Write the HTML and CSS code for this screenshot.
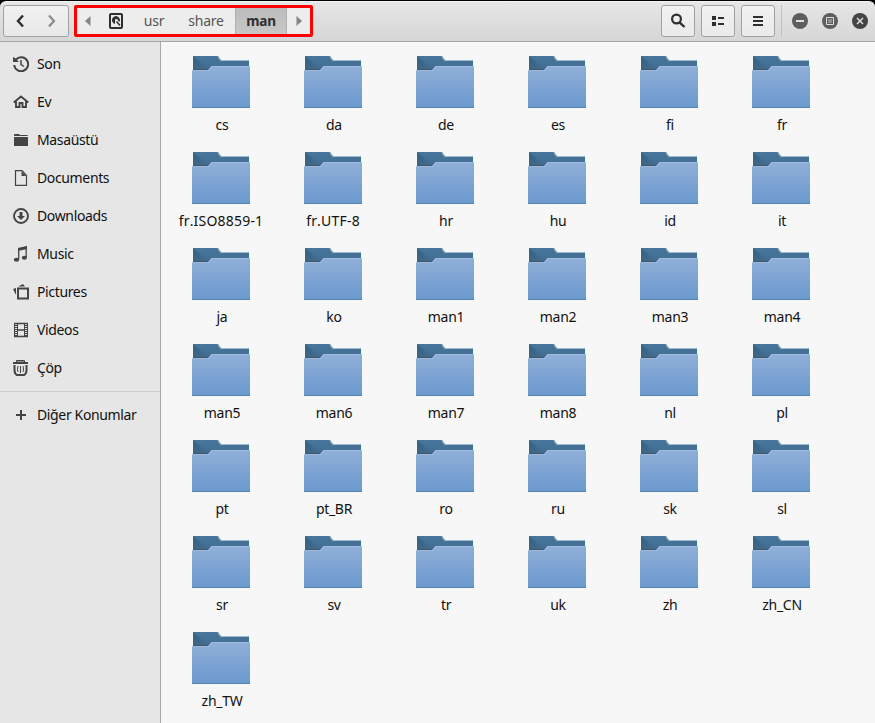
FILE: index.html
```
<!DOCTYPE html>
<html lang="tr">
<head>
<meta charset="utf-8">
<title>man</title>
<link rel="stylesheet" href="styles.css">
</head>
<body>
<div class="window">
<header class="header">
  <div class="nav">
    <span class="nav-btn"><svg width="16" height="16" viewBox="0 0 16 16"><path d="M11 2.500 6 8l5 5.500" fill="none" stroke="#2e2e2e" stroke-width="2.400"/></svg></span>
    <span class="nav-btn"><svg width="16" height="16" viewBox="0 0 16 16"><path d="M5 2.500 10 8l-5 5.500" fill="none" stroke="#8b8b8b" stroke-width="2.200"/></svg></span>
  </div>
  <div class="path">
    <span class="arrow"><svg width="6" height="10" viewBox="0 0 6 10"><path d="M5.500 0v10L0 5z" fill="#858585"/></svg></span>
    <span class="disk"><svg width="14" height="16" viewBox="0 0 14 16"><rect x="1" y="1" width="12" height="14" rx="1" fill="none" stroke="#2e2e2e" stroke-width="2"/><path d="M6 11A4 4 0 1 1 10.500 9L8.200 6.800 6 6.200z" fill="#2e2e2e"/><path d="m6.500 7 1.500-1.200L9 7.500 7.500 8.500z" fill="#ededed"/><path d="m7.500 8.500 3.500 4" stroke="#2e2e2e" stroke-width="1.500"/></svg></span>
    <span class="crumb usr">usr</span>
    <span class="crumb share">share</span>
    <span class="crumb current">man</span>
    <span class="arrow end"><svg width="6" height="10" viewBox="0 0 6 10"><path d="M.5 0v10L6 5z" fill="#858585"/></svg></span>
  </div>
  <div class="tools">
    <span class="tool"><svg width="16" height="16" viewBox="0 0 16 16"><circle cx="6.500" cy="6" r="4.400" fill="none" stroke="#2e2e2e" stroke-width="2.200"/><path d="m9.500 9.300 5 4.700" stroke="#2e2e2e" stroke-width="2.400"/></svg></span>
    <span class="tool"><svg width="16" height="16" viewBox="0 0 16 16"><path d="M2 3h4v4H2zM2 9h4v4H2zM8 4h6v2H8zM8 10h6v2H8z" fill="#2e2e2e"/></svg></span>
    <span class="tool"><svg width="16" height="16" viewBox="0 0 16 16"><path d="M3 3h10v2H3zM3 7h10v2H3zM3 11h10v2H3z" fill="#2e2e2e"/></svg></span>
  </div>
  <div class="controls">
    <svg width="16" height="16" viewBox="0 0 16 16"><circle cx="8" cy="8" r="8" fill="#5e5e5e"/><path d="M4 7h8v2H4z" fill="#dedede"/></svg>
    <svg width="16" height="16" viewBox="0 0 16 16"><circle cx="8" cy="8" r="8" fill="#5e5e5e"/><path d="M4.500 4.500h7v7h-7z" fill="none" stroke="#dedede"/><path d="M6 6h4v4H6z" fill="#8c8c8c"/></svg>
    <svg width="16" height="16" viewBox="0 0 16 16"><circle cx="8" cy="8" r="8" fill="#444"/><path d="m5 5 6 6m0-6-6 6" stroke="#dedede" stroke-width="1.500"/></svg>
  </div>
</header>
<div class="body">
<nav class="sidebar">
  <div class="place"><svg width="16" height="16" viewBox="0 0 16 16"><path d="M3 3.500A7 7 0 1 1 1.200 9" fill="none" stroke="#444" stroke-width="2"/><path d="M0 1v5h6L4.500 4.500 2 2z" fill="#444"/><path d="M8 4v4.500l3 2" fill="none" stroke="#444" stroke-width="1.500"/></svg>Son</div>
  <div class="place"><svg width="16" height="16" viewBox="0 0 16 16"><path d="M.7 8.500 8 2.500l7.300 6M3 7.500V13h3.500V9h3v4H13V7.500" fill="none" stroke="#444" stroke-width="1.900"/></svg>Ev</div>
  <div class="place"><svg width="16" height="16" viewBox="0 0 16 16"><path d="M1 4V3q0-1 1-1h4l1 1h7q1 0 1 1zM1 5h14v9H1z" fill="#444"/></svg>Masaüstü</div>
  <div class="place"><svg width="16" height="16" viewBox="0 0 16 16"><path d="M2.500.6h6.500l4.500 4.900v9.900h-11z" fill="none" stroke="#444" stroke-width="1.200"/><path d="M8.500 1v5H13z" fill="#444"/></svg>Documents</div>
  <div class="place"><svg width="16" height="16" viewBox="0 0 16 16"><circle cx="8" cy="8" r="7" fill="none" stroke="#444" stroke-width="1.900"/><path d="M6.500 4h3v4H12l-4 4-4-4h2.500z" fill="#444"/></svg>Downloads</div>
  <div class="place"><svg width="16" height="16" viewBox="0 0 16 16"><path d="M5.700 13V3l7.500-2v10.500" fill="none" stroke="#444" stroke-width="1.300"/><path d="m5 2 9-2v3L5 5z" fill="#444"/><ellipse cx="3.500" cy="13.800" rx="2.700" ry="2" fill="#444"/><ellipse cx="11.400" cy="11.800" rx="2.600" ry="2" fill="#444"/></svg>Music</div>
  <div class="place pictures"><svg width="16" height="16" viewBox="0 0 16 16"><path d="M5 4.500h10v10H5z" fill="none" stroke="#444" stroke-width="2"/><path d="m5 2.500 5-2.500 2 2.500zM0 5l3-1v7z" fill="#444"/></svg>Pictures</div>
  <div class="place"><svg width="16" height="16" viewBox="0 0 16 16"><path d="M1.500 1v14m13-14v14M4.500 1v14m7-14v14" stroke="#444"/><path d="M1 1.500h14M4 8h8M1 14.500h14" stroke="#444" stroke-width="1.300"/><path d="M3 1v14m10-14v14" stroke="#444" stroke-width="2" stroke-dasharray="1 1"/></svg>Videos</div>
  <div class="place"><svg width="16" height="16" viewBox="0 0 16 16"><path d="M3 2.500V1q0-1 1-1h7q1 0 1 1v1h3v2H0V2h3zM4 1.500V2h7v-.5z" fill="#444" fill-rule="evenodd"/><path d="M1.500 5v5q0 4 2.500 5h7q2.500-1 2.500-5V5" fill="none" stroke="#444" stroke-width="2"/><path d="M5 6q-1 3 0 6M7.500 6v7M10 6q1 3 0 6" fill="none" stroke="#444"/></svg>Çöp</div>
  <div class="place other"><svg width="16" height="16" viewBox="0 0 16 16"><path d="M8 3v10M3 8h10" stroke="#444" stroke-width="2"/></svg>Diğer Konumlar</div>
</nav>
<main class="files" id="files"></main>
</div>
</div>
<svg class="defs" width="0" height="0"><defs>
<linearGradient id="front" x2="0" y2="1"><stop stop-color="#90afd8"/><stop offset="1" stop-color="#6b98cd"/></linearGradient>
<linearGradient id="back" x2="0" y2="1"><stop stop-color="#47769b"/><stop offset="1" stop-color="#416b8d"/></linearGradient>
<linearGradient id="fold" x2="1" y2=".3"><stop stop-color="#39607f"/><stop offset="1" stop-color="#426f93"/></linearGradient>
<symbol id="folder" viewBox="0 0 58 52"><path d="M1 0h25l3 4h28v12H1z" fill="url(#back)"/><path d="M1 0 17 13.500 16 14H1z" fill="url(#fold)"/><path d="M26 .5 28.500 4.500H57" fill="none" stroke="#9db9cf"/><path d="M1 13.500h15l3-4" fill="none" stroke="#365670"/><path d="M0 14h16l3-4h39v42H0z" fill="url(#front)"/><path d="M0 14.500h16.500l3-4H58" fill="none" stroke="#a3c0e2" stroke-width=".8"/><path d="M0 51.500h58" stroke="#5684bd"/></symbol>
</defs></svg>
<script src="files.js"></script>
</body>
</html>
```
FILE: styles.css
```
* { box-sizing: border-box; }
body { margin: 0; background: #000; font: 14px/20px "Noto Sans", "Open Sans", sans-serif; color: #111; }
svg { display: block; flex: none; }
.window { width: 875px; height: 723px; padding-top: 1px; display: flex; flex-direction: column; overflow: hidden; }
.header { height: 41px; flex: none; display: flex; align-items: flex-start; padding: 4px 7px 0 3px; background: linear-gradient(#e6e6e6, #d6d6d6); border-bottom: 1px solid #a8a8a8; border-top: 1px solid #f4f4f4; border-radius: 6px 6px 0 0; }
.nav { width: 66px; height: 32px; margin-top: -1px; display: flex; border: 1px solid #a1a1a1; border-radius: 3px; background: linear-gradient(#f1f1f1, #e8e8e8); }
.nav-btn { width: 32px; display: flex; align-items: center; justify-content: center; }
.path { width: 239px; height: 32px; margin: -1px 0 0 5px; display: flex; border: 3px solid #f00; border-radius: 2px; background: #ededed; color: #555; }
.arrow { width: 24px; display: flex; align-items: center; padding-left: 8px; }
.disk { width: 28px; display: flex; align-items: center; padding-left: 8px; }
.crumb { line-height: 25px; text-align: center; letter-spacing: -.2px; }
.usr { width: 50px; }
.share { width: 56px; padding-right: 2px; }
.current { width: 52px; background: linear-gradient(#bcbcbc, #c7c7c7); border: solid #b0b0b0; border-width: 0 1px; color: #2e2e2e; font-weight: 700; font-size: 13.6px; }
.arrow.end { width: 23px; padding-left: 9px; }
.tools { margin: -1px 0 0 auto; display: flex; gap: 6px; }
.tool { width: 34px; height: 32px; display: flex; align-items: center; justify-content: center; border: 1px solid #a1a1a1; border-radius: 3px; background: linear-gradient(#f1f1f1, #eaeaea); }
.controls { height: 32px; margin: -1px 0 0 6px; padding-left: 10px; display: flex; gap: 14px; align-items: center; border-left: 1px solid #c2c2c2; }
.body { flex: 1; display: flex; min-height: 0; }
.sidebar { width: 161px; flex: none; padding-top: 3px; background: #e6e6e6; border-right: 1px solid #a8a8a8; }
.place { height: 38px; display: flex; align-items: center; gap: 8px; padding-left: 13px; white-space: nowrap; letter-spacing: -.36px; }
.other { height: 47px; margin-top: 4px; border-top: 1px solid #cdcdcd; }
.files { flex: 1; display: grid; grid-template-columns: repeat(6, 112px); grid-auto-rows: 96px; align-content: start; padding: 14px 0 0 4px; background: #f7f7f7; }
.file { display: flex; flex-direction: column; align-items: center; gap: 7px; white-space: nowrap; }
.file span { padding-left: 2px; letter-spacing: -.3px; }
.file .long { padding-left: 0; letter-spacing: .2px; font-kerning: none; }
.defs { position: absolute; }
```
FILE: files.js
```
const names = ["cs","da","de","es","fi","fr","fr.ISO8859-1","fr.UTF-8","hr","hu","id","it","ja","ko","man1","man2","man3","man4","man5","man6","man7","man8","nl","pl","pt","pt_BR","ro","ru","sk","sl","sr","sv","tr","uk","zh","zh_CN","zh_TW"];
document.getElementById("files").innerHTML = names.map(n => `<div class="file"><svg width="58" height="52"><use href="#folder"/></svg><span class="${n.includes(".") ? "long" : ""}">${n}</span></div>`).join("");
```
